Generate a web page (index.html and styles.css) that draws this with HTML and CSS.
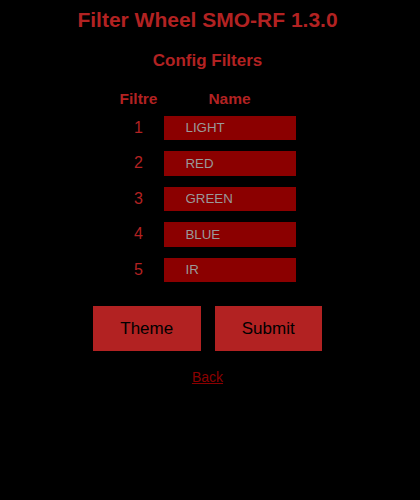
FILE: index.html
```html
<!DOCTYPE html>
<html lang="en">
<head>
  <meta charset="UTF-8" />
  <meta name="viewport" content="width=device-width, initial-scale=1.0"/>
  <title>Filter Wheel SMO-RF</title>
  <link rel="stylesheet" href="styles.css">
</head>
<body>

  <h1>Filter Wheel SMO-RF 1.3.0</h1>
  <h2>Config Filters</h2>

  <form class="filters" onsubmit="return false;">
    <div class="grid">
      <div class="head">Filtre</div>
      <div class="head">Name</div>

      <div class="num">1</div>
      <input type="text" name="f1" value="LIGHT" />

      <div class="num">2</div>
      <input type="text" name="f2" value="RED" />

      <div class="num">3</div>
      <input type="text" name="f3" value="GREEN" />

      <div class="num">4</div>
      <input type="text" name="f4" value="BLUE" />

      <div class="num">5</div>
      <input type="text" name="f5" value="IR" />
    </div>

    <div class="buttons">
      <button type="button">Theme</button>
      <button type="submit">Submit</button>
    </div>
  </form>

  <a class="back" href="#">Back</a>

</body>
</html>
```

FILE: styles.css
```css
body {
  font-family: "Liberation Sans", Arial, sans-serif;
  background-color: #000000;
  color: #b22222;
  margin: 0;
  padding: 0 5px 0 0;
  display: flex;
  flex-direction: column;
  align-items: center;
}

h1 {
  font-size: 21px;
  line-height: 24px;
  margin: 0;
  padding-top: 8px;
}

h2 {
  font-size: 17px;
  line-height: 20px;
  margin: 19px 0 0 0;
}

.filters {
  display: flex;
  flex-direction: column;
  align-items: center;
}

.grid {
  display: grid;
  grid-template-columns: 38px 132px;
  column-gap: 6px;
  row-gap: 11px;
  align-items: center;
  margin-top: 18.5px;
}

.head {
  font-size: 15.5px;
  font-weight: bold;
  line-height: 18px;
  text-align: center;
  margin-bottom: -3px;
}

.num {
  font-size: 16px;
  text-align: center;
}

input[type="text"] {
  font-family: "Liberation Sans", Arial, sans-serif;
  width: 100%;
  height: 24.5px;
  font-size: 13.3px;
  color: #9a9a9a;
  background-color: #8b0000;
  border: none;
  padding: 0 0 0 22px;
  margin: 0;
  box-sizing: border-box;
  outline: none;
}

.buttons {
  display: flex;
  gap: 14px;
  margin-top: 24px;
}

button {
  font-family: "Liberation Sans", Arial, sans-serif;
  font-size: 17px;
  width: 107.5px;
  height: 45px;
  border: none;
  border-radius: 0;
  background-color: #b22222;
  color: #000000;
  cursor: pointer;
}

.back {
  font-size: 14px;
  line-height: 16px;
  color: #8b0000;
  margin-top: 18px;
}
```
